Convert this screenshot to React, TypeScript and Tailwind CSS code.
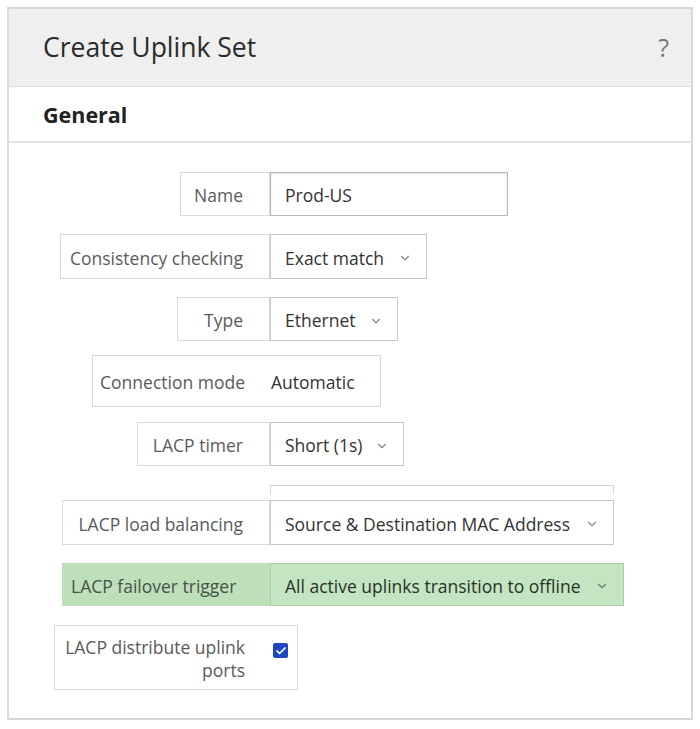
import { Check, ChevronDown } from "lucide-react";

const font = { fontFamily: '"Open Sans", "Liberation Sans", sans-serif' };

function Label({ text, className = "" }: { text: string; className?: string }) {
  return (
    <div
      className={`flex items-center justify-end border border-[#d9d9d9] bg-white pl-2 pr-[26px] pt-[3px] text-[17.5px] text-[#5a5a5a] ${className}`}
    >
      {text}
    </div>
  );
}

function Select({ value, width }: { value: string; width: string }) {
  return (
    <div
      className={`flex h-full items-center justify-between border border-[#c6c6c6] bg-white pl-[14px] pr-[14px] text-[17.5px] text-[#333] ${width}`}
    >
      <span className="pt-[3px]">{value}</span>
      <ChevronDown size={14} strokeWidth={2} className="mt-[3px] text-[#888]" />
    </div>
  );
}

export default function App() {
  return (
    <div className="min-h-[729px] bg-white p-[7px]" style={font}>
      <div className="flex h-[713px] w-[686px] flex-col border-2 border-[#d8d8d8]">
        {/* header */}
        <div className="flex h-[78px] items-center justify-between border-b border-[#dcdcdc] bg-[#efeff0] pl-[34px] pr-[22px]">
          <h1 className="text-[26.5px] text-[#2b2b2b]">Create Uplink Set</h1>
          <span className="text-[25px] text-[#777]">?</span>
        </div>
        <div className="flex h-[56px] items-center border-b-2 border-[#e3e3e3] pl-[34px]">
          <h2 className="pt-[2px] text-[21.5px] font-bold text-[#222]">General</h2>
        </div>

        {/* form */}
        <div className="flex flex-col pt-[29px]">
          <div className="flex h-[44px]">
            <div className="flex w-[261px] justify-end">
              <Label text="Name" className="w-[90px]" />
            </div>
            <div className="flex h-full w-[238px] items-center border border-[#b9b9b9] bg-white pl-[14px] pt-[3px] text-[17.5px] text-[#333] shadow-[inset_0_1px_2px_rgba(0,0,0,0.12)]">
              Prod-US
            </div>
          </div>

          <div className="mt-[18px] flex h-[45px]">
            <div className="flex w-[261px] justify-end">
              <Label text="Consistency checking" className="w-[210px]" />
            </div>
            <Select value="Exact match" width="w-[157px]" />
          </div>

          <div className="mt-[18px] flex h-[44px]">
            <div className="flex w-[261px] justify-end">
              <Label text="Type" className="w-[93px]" />
            </div>
            <Select value="Ethernet" width="w-[128px]" />
          </div>

          <div className="ml-[83px] mt-[14px] flex h-[52px] w-[289px] items-center border border-[#d9d9d9] pt-[3px] text-[17.5px]">
            <span className="w-[178px] pr-[26px] text-right text-[#5a5a5a]">Connection mode</span>
            <span className="text-[#333]">Automatic</span>
          </div>

          <div className="mt-[15px] flex h-[44px]">
            <div className="flex w-[261px] justify-end">
              <Label text="LACP timer" className="w-[133px]" />
            </div>
            <Select value="Short (1s)" width="w-[134px]" />
          </div>

          <div className="ml-[261px] mt-[19px] h-[9px] w-[344px] border-x border-t border-[#d3d3d3]" />

          <div className="mt-[6px] flex h-[45px]">
            <div className="flex w-[261px] justify-end">
              <Label text="LACP load balancing" className="w-[208px]" />
            </div>
            <Select value="Source & Destination MAC Address" width="w-[344px]" />
          </div>

          <div className="mt-[18px] flex h-[43px]">
            <div className="flex w-[261px] justify-end">
              <div className="flex w-[208px] items-center bg-[#bde0bb] pl-[9px] pt-[3px] text-[17.5px] text-[#465246]">
                LACP failover trigger
              </div>
            </div>
            <div className="flex h-full w-[354px] items-center justify-between border border-[#a9cfa7] bg-[#c4e5c2] pl-[14px] pr-[14px] text-[17.5px] text-[#263326]">
              <span className="pt-[3px]">All active uplinks transition to offline</span>
              <ChevronDown size={14} strokeWidth={2} className="mt-[3px] text-[#6b7d6b]" />
            </div>
          </div>

          <div className="ml-[45px] mt-[19px] flex h-[65px] w-[244px] items-center border border-[#d9d9d9]">
            <div className="w-[190px] pt-[3px] text-right text-[17.5px] leading-[23px] text-[#5a5a5a]">
              LACP distribute uplink
              <br />
              ports
            </div>
            <div className="mb-[14px] ml-[28px] flex h-[15px] w-[15px] items-center justify-center rounded-[2px] bg-[#1f47c2]">
              <Check size={12} strokeWidth={3.5} className="text-white" />
            </div>
          </div>
        </div>
      </div>
    </div>
  );
}
